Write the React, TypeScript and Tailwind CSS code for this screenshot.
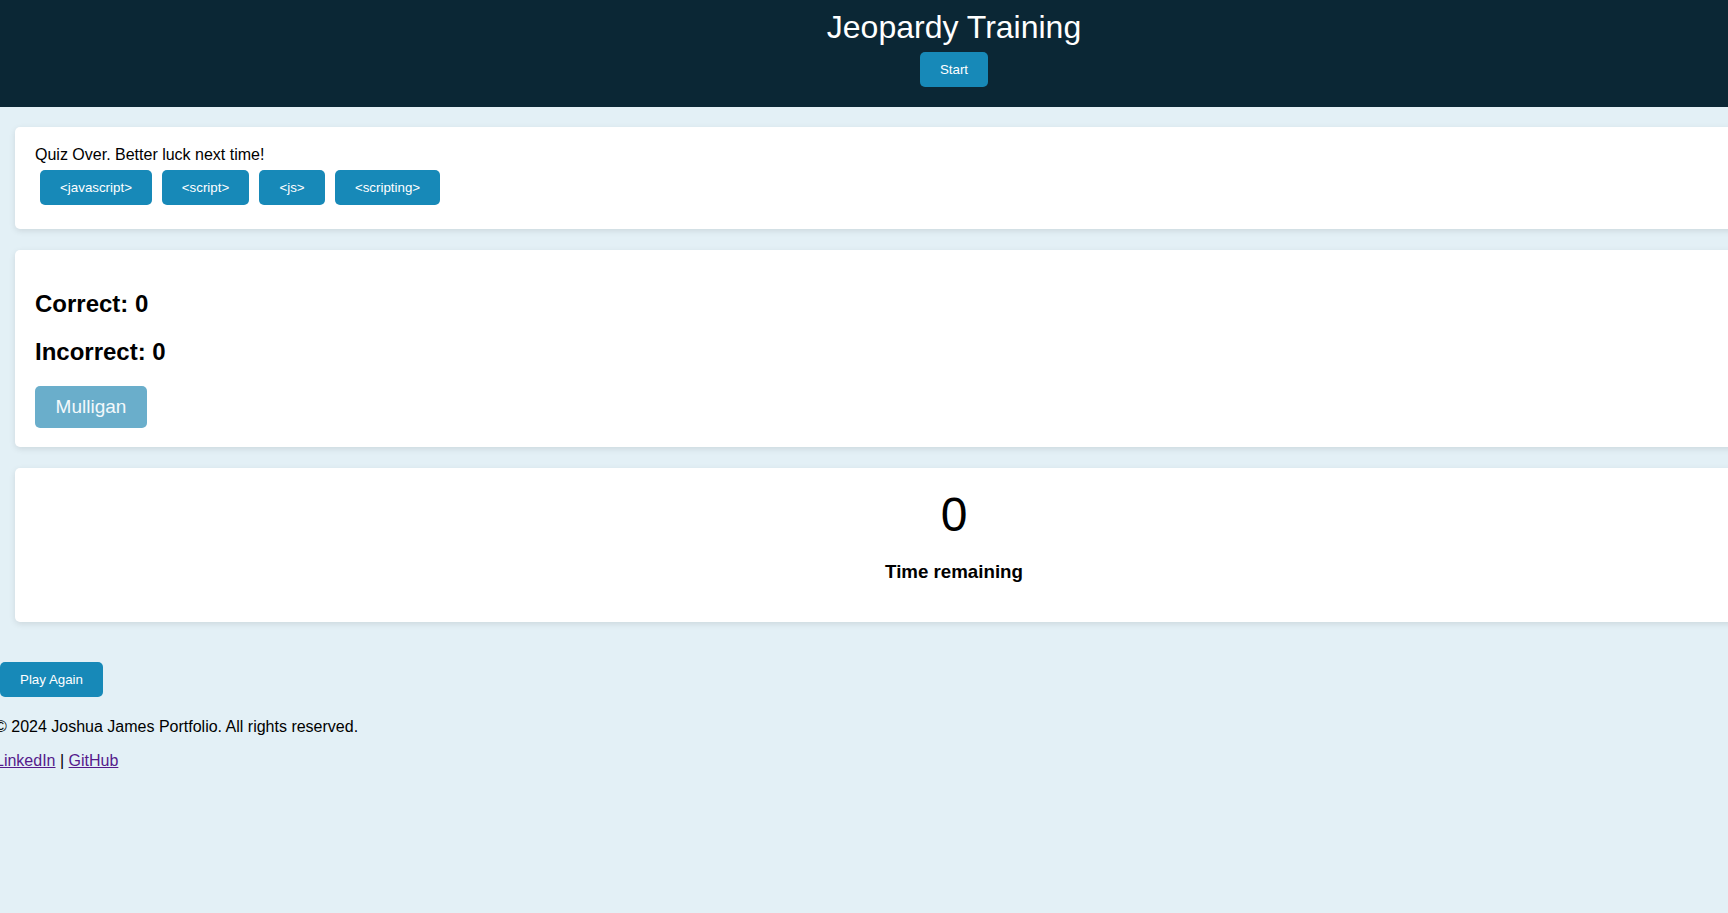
import React from "react";

const btn =
  "h-[35px] px-[20px] rounded-[5px] bg-[#1789b8] text-white text-[13.33px] leading-[15px] flex items-center justify-center";

export default function App() {
  return (
    <div
      className="w-full min-h-screen overflow-hidden bg-[#e3f0f6] text-black"
      style={{ fontFamily: '"Liberation Sans", Arial, sans-serif' }}
    >
      <div className="w-[1908px] min-h-[913px] flex flex-col">
        <header className="bg-[#0b2735] h-[107px] flex flex-col items-center pt-[9px]">
          <h1 className="text-[32px] leading-[37px] font-normal text-white">Jeopardy Training</h1>
          <button className={btn + " mt-[6px] w-[68px] px-0"}>Start</button>
        </header>

        <section className="mx-[15px] mt-[20px] bg-white rounded-[5px] shadow-[0_2px_6px_rgba(0,0,0,0.1)] pt-[19px] pb-[24px] px-[20px]">
          <div className="text-[16px] leading-[18px]">Quiz Over. Better luck next time!</div>
          <div className="mt-[6px] pl-[5px] flex gap-[10px]">
            <button className={btn + " w-[112px] px-0"}>&lt;javascript&gt;</button>
            <button className={btn + " w-[87px] px-0"}>&lt;script&gt;</button>
            <button className={btn + " w-[66px] px-0"}>&lt;js&gt;</button>
            <button className={btn + " w-[105px] px-0"}>&lt;scripting&gt;</button>
          </div>
        </section>

        <section className="mx-[15px] mt-[21px] bg-white rounded-[5px] shadow-[0_2px_6px_rgba(0,0,0,0.1)] pt-[40px] pb-[19px] px-[20px] flex flex-col items-start">
          <h2 className="text-[24px] leading-[28px] font-bold">Correct: 0</h2>
          <h2 className="mt-[20px] text-[24px] leading-[28px] font-bold">Incorrect: 0</h2>
          <button className="mt-[20px] h-[42px] w-[112px] rounded-[5px] bg-[#6aaecb] text-[#f3f9fb] text-[19px] leading-[22px] flex items-center justify-center">
            Mulligan
          </button>
        </section>

        <section className="mx-[15px] mt-[21px] bg-white rounded-[5px] shadow-[0_2px_6px_rgba(0,0,0,0.1)] pt-[19px] pb-[39px] flex flex-col items-center">
          <div className="text-[48px] leading-[56px]">0</div>
          <h3 className="mt-[18px] text-[18.72px] leading-[22px] font-bold">Time remaining</h3>
        </section>

        <div className="mt-[40px]">
          <button className={btn + " w-[103px] px-0"}>Play Again</button>
        </div>

        <footer className="ml-[-5px]">
          <p className="mt-[21px] text-[16px] leading-[18px]">© 2024 Joshua James Portfolio. All rights reserved.</p>
          <p className="mt-[16px] text-[16px] leading-[18px]">
            <a href="#" className="underline text-[#551a8b]">LinkedIn</a> |{" "}
            <a href="#" className="underline text-[#551a8b]">GitHub</a>
          </p>
        </footer>
      </div>
    </div>
  );
}
